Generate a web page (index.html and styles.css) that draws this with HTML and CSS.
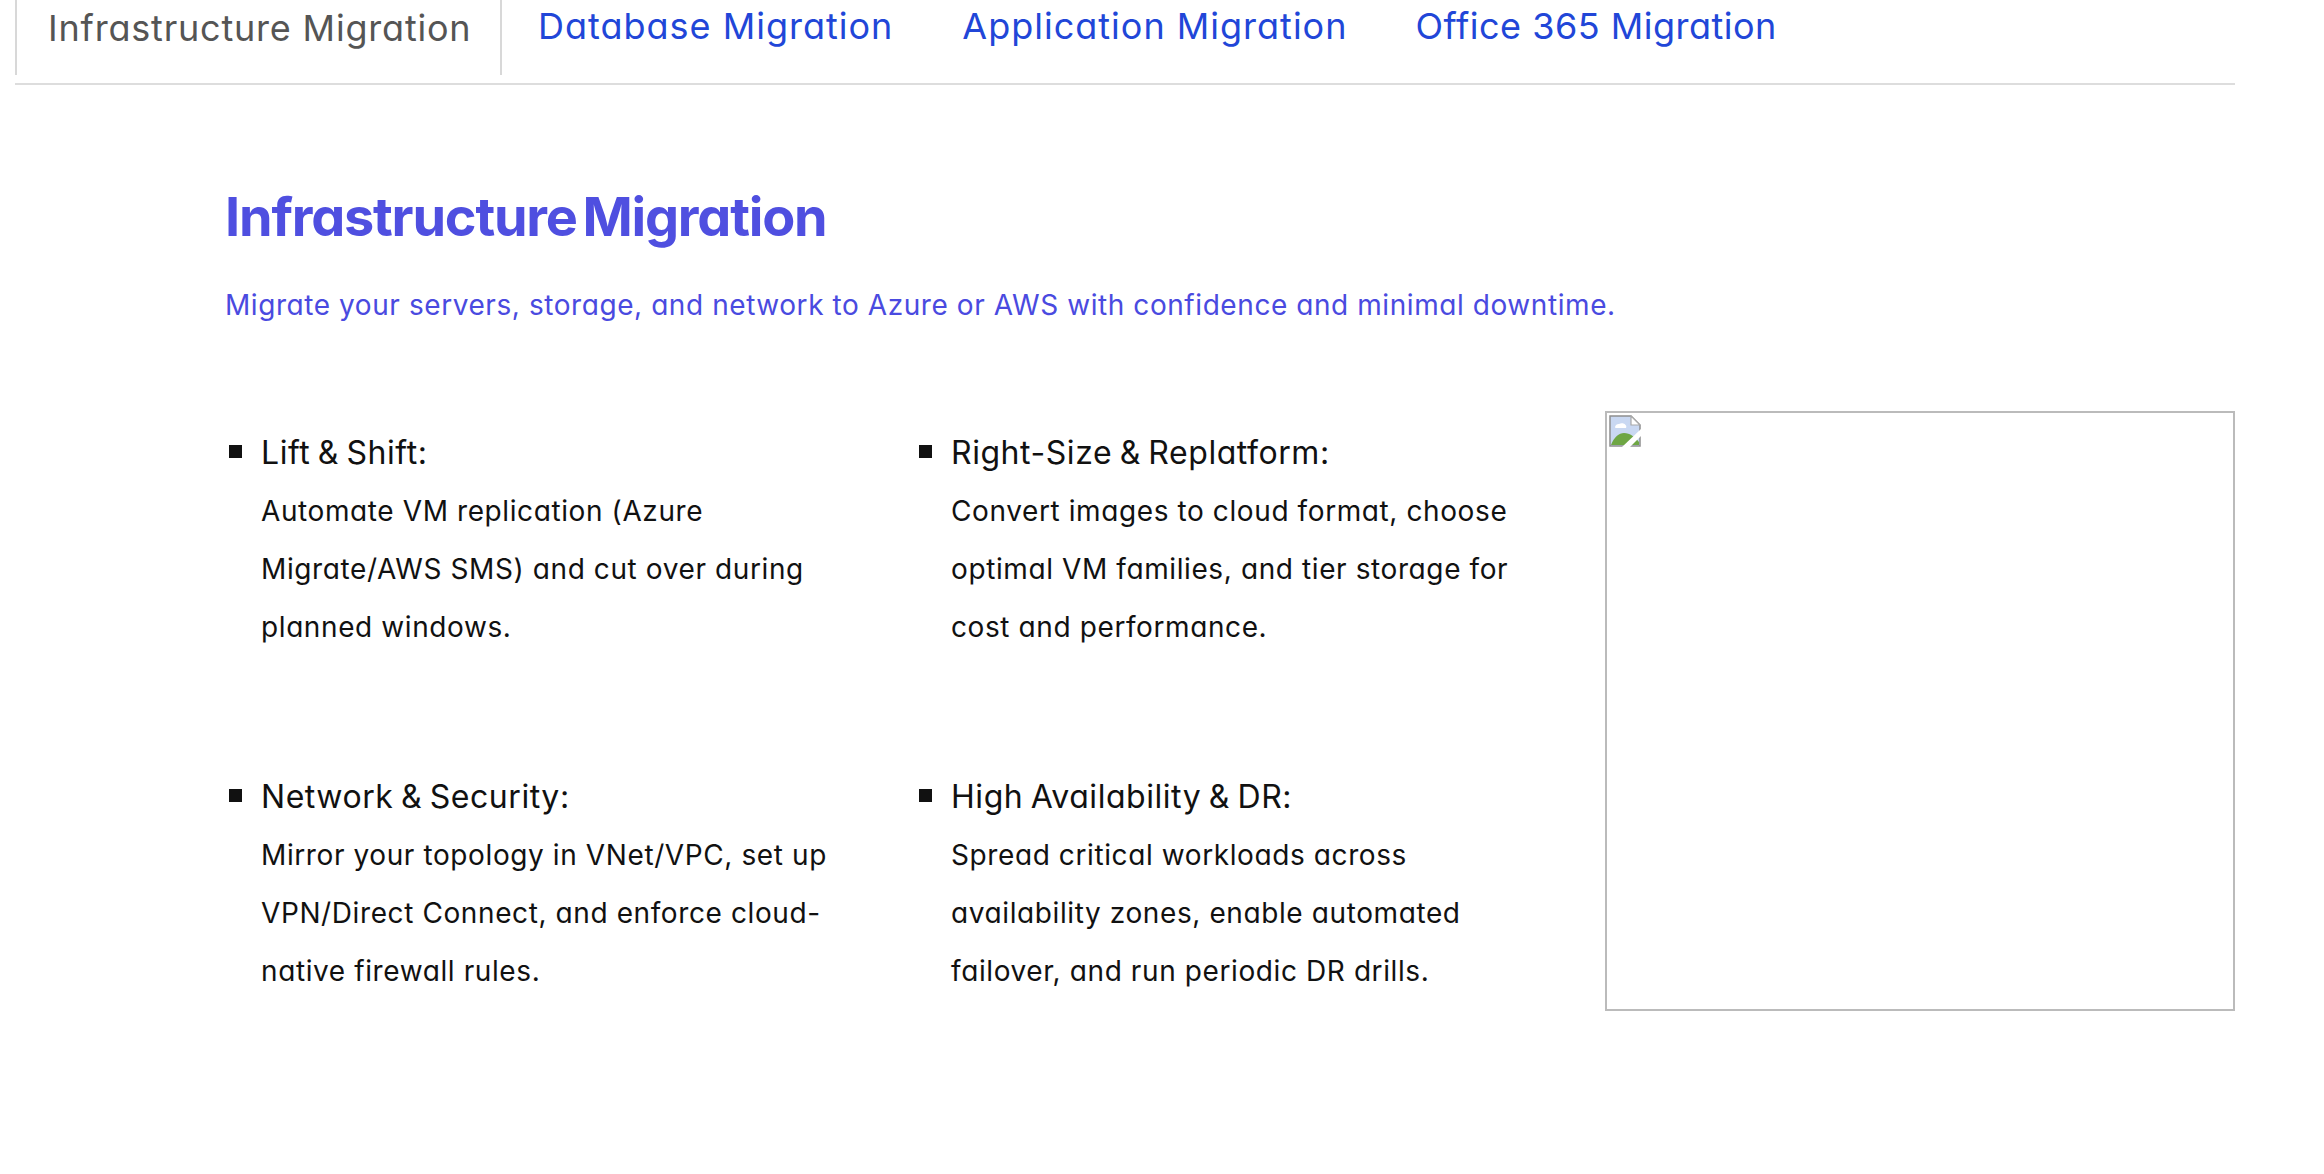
FILE: index.html
```html
<!DOCTYPE html>
<html lang="en">
<head>
<meta charset="utf-8">
<title>Infrastructure Migration</title>
<link rel="stylesheet" href="styles.css">
</head>
<body>
<nav class="tabs">
  <a class="tab tab-active">Infrastructure Migration</a>
  <a class="tab tab-db">Database Migration</a>
  <a class="tab tab-app">Application Migration</a>
  <a class="tab tab-365">Office 365 Migration</a>
</nav>
<main class="panel">
  <h1 class="title">Infrastructure Migration</h1>
  <p class="lead">Migrate your servers, storage, and network to Azure or AWS with confidence and minimal downtime.</p>
  <div class="content">
    <ul class="features">
      <li class="feature">
        <h2 class="feature-name">Lift &amp; Shift:</h2>
        <p class="feature-text">Automate VM replication (Azure<br>Migrate/AWS SMS) and cut over during<br>planned windows.</p>
      </li>
      <li class="feature">
        <h2 class="feature-name">Right-Size &amp; Replatform:</h2>
        <p class="feature-text">Convert images to cloud format, choose<br>optimal VM families, and tier storage for<br>cost and performance.</p>
      </li>
      <li class="feature">
        <h2 class="feature-name">Network &amp; Security:</h2>
        <p class="feature-text">Mirror your topology in VNet/VPC, set up<br>VPN/Direct Connect, and enforce cloud-<br>native firewall rules.</p>
      </li>
      <li class="feature">
        <h2 class="feature-name">High Availability &amp; DR:</h2>
        <p class="feature-text">Spread critical workloads across<br>availability zones, enable automated<br>failover, and run periodic DR drills.</p>
      </li>
    </ul>
    <div class="image-box">
      <svg class="broken" width="32" height="32" viewBox="0 0 32 32" aria-hidden="true">
        <path d="M1 1H22L31 10V31H1Z" fill="#c9d8f2" stroke="#8f8f8f" stroke-width="1.5"/>
        <path d="M22 1V10H31Z" fill="#fff" stroke="#a8a8a8" stroke-width="1.2"/>
        <path d="M6 12a4 4 0 0 1 4-3a5 5 0 0 1 7 1.500a2.500 2.500 0 0 1 0 2.500H6.500Z" fill="#fff"/>
        <path d="M2 30C5 22 10 18 15 18C21 18 26 22 30 27V30Z" fill="#6ea644"/>
        <path d="M13 32L33 13V20L21 32Z" fill="#fff"/>
      </svg>
    </div>
  </div>
</main>
</body>
</html>
```
FILE: styles.css
```css
* { box-sizing: border-box; }
html, body { margin: 0; padding: 0; background: #fff; }
body {
  width: 2324px;
  height: 1174px;
  overflow: hidden;
  font-family: Inter, "Noto Sans", sans-serif;
  font-feature-settings: "cv11" 1;
  color: #111;
}
.tabs {
  display: flex;
  align-items: flex-start;
  margin-left: 15px;
  width: 2220px;
  height: 85px;
  border-bottom: 2px solid #ddd;
}
.tab {
  display: block;
  font-size: 36px;
  line-height: 52px;
  letter-spacing: 0.8px;
  color: #2146d8;
  white-space: nowrap;
}
.tab-active {
  width: 487px;
  height: 75px;
  padding: 2px 0 0 31px;
  border-left: 2px solid #d8d8d8;
  border-right: 2px solid #d8d8d8;
  color: #555;
}
.tab-db { margin-left: 36px; letter-spacing: 1px; }
.tab-app { margin-left: 69px; letter-spacing: 1px; }
.tab-365 { margin-left: 68px; letter-spacing: 0.5px; }
.panel { padding: 0 0 0 225px; }
.title {
  margin: 93px 0 0;
  font-size: 54px;
  line-height: 78px;
  font-weight: 700;
  letter-spacing: -1.2px;
  word-spacing: -6px;
  color: #4f4fe0;
}
.lead {
  margin: 29px 0 0;
  font-size: 28px;
  line-height: 40px;
  letter-spacing: 0.57px;
  color: #4a4ae0;
}
.content {
  display: flex;
  align-items: flex-start;
  margin-top: 86px;
}
.features {
  list-style: none;
  display: grid;
  grid-template-columns: 690px 690px;
  grid-auto-rows: 344px;
  width: 1380px;
  margin: 0;
  padding: 0;
}
.feature {
  position: relative;
  padding-left: 36px;
}
.feature::before {
  content: "";
  position: absolute;
  left: 4px;
  top: 34px;
  width: 13px;
  height: 13px;
  background: #111;
}
.feature-name {
  margin: 18px 0 0;
  font-size: 32px;
  line-height: 48px;
  font-weight: 400;
  letter-spacing: 0.55px;
  word-spacing: -2px;
}
.feature-text {
  margin: 5px 0 0;
  font-size: 28px;
  line-height: 58px;
  letter-spacing: 0.6px;
}
.image-box {
  width: 630px;
  height: 600px;
  padding: 2px;
  border: 2px solid #bbb;
}
.broken { display: block; }
```
